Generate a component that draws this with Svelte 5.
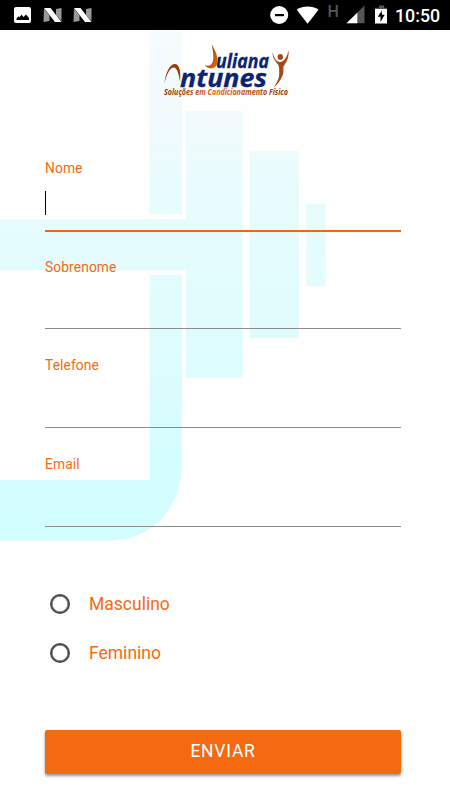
<script lang="ts">
    let values = $state({ nome: "", sobrenome: "", telefone: "", email: "" });
    let sexo = $state("");
    let active = $state("nome");

    const fields = [
        { id: "nome", label: "Nome" },
        { id: "sobrenome", label: "Sobrenome" },
        { id: "telefone", label: "Telefone" },
        { id: "email", label: "Email" },
    ] as const;

    const options = ["Masculino", "Feminino"];

    function handleSubmit(event: SubmitEvent) {
        event.preventDefault();
    }
</script>

<div class="screen">
    <svg class="backdrop" viewBox="0 0 450 800" aria-hidden="true">
        <defs>
            <linearGradient id="fade" gradientUnits="userSpaceOnUse" x1="0" y1="30" x2="0" y2="541">
                <stop offset="0" stop-color="#f7fbfc" />
                <stop offset="0.18" stop-color="#f1fafc" />
                <stop offset="0.3" stop-color="#e9fcfd" />
                <stop offset="0.6" stop-color="#dffcfd" />
                <stop offset="0.85" stop-color="#d4fdff" />
                <stop offset="1" stop-color="#d2fdff" />
            </linearGradient>
        </defs>
        <g fill="url(#fade)">
            <path d="M149.7 31h32.3v183.3h-32.3z" />
            <path d="M0 219.3h186V111h56.6v266.7H186V270.3H0z" />
            <path d="M249.4 151h49.6v187.3h-49.6z" />
            <path d="M306.2 203.7h19.6v82.2h-19.6z" />
            <path d="M149.7 274.8H182V462c0 48-31 78.6-74 78.6H0V480h149.7z" />
        </g>
    </svg>

    <div class="status">
        <svg width="110" height="30" viewBox="0 0 110 30">
            <path fill="#fff" fill-rule="evenodd" d="M16 7h13a2 2 0 0 1 2 2v12a2 2 0 0 1-2 2H16a2 2 0 0 1-2-2V9a2 2 0 0 1 2-2zm0.500 13h12.500v-2l-3-3.500-2.500 2.500-2-2.300-2 2.500-1-1-2 2.300z" />
            {#each [0, 30] as x}
                <g transform="translate({x} 0)">
                    <path fill="#999" d="M44 8.500l5.500 7V21l-6 1zM61.500 8v13l-5.500-6V9z" />
                    <path fill="#fff" d="M44 8h6.500l11 14H55z" />
                </g>
            {/each}
        </svg>
        <div class="right">
            <svg width="130" height="30" viewBox="265 0 130 30">
                <circle cx="279.200" cy="15" r="9" fill="#fff" />
                <path fill="#000" d="M275 14h9v2.200h-9z" />
                <path fill="#fff" d="M296.700 9.800c6-4.400 15.800-4.400 21.800 0L307.600 23.700z" />
                <text class="net" x="327.500" y="16.500">H</text>
                <path fill="#555" d="M364.500 5.500V23.300H346.500z" />
                <path fill="#fff" d="M357.300 12.700V23.300H346.500z" />
                <path fill="#555" d="M379 5.500h5v2.300h2.800V13H375V7.800h4z" />
                <path fill="#fff" fill-rule="evenodd" d="M375 9h12v14.500H375zM382 10l-4.200 6.800h2.700V22l4.200-7.200H382z" />
            </svg>
            <span>10:50</span>
        </div>
    </div>

    <header>
        <svg width="130" height="60" viewBox="162 42 130 60" role="img" aria-label="Juliana Antunes">
            <defs>
                <linearGradient id="flame" x1="0" y1="0" x2="1" y2="1">
                    <stop offset="0" stop-color="#8c3808" />
                    <stop offset="1" stop-color="#ed6a0c" />
                </linearGradient>
                <linearGradient id="tag" x1="0" y1="0" x2="1" y2="0">
                    <stop offset="0" stop-color="#8c3808" />
                    <stop offset="0.45" stop-color="#e06409" />
                    <stop offset="1" stop-color="#8c3808" />
                </linearGradient>
            </defs>
            <text class="name" x="216" y="67.500" font-size="19" textLength="53" lengthAdjust="spacingAndGlyphs">uliana</text>
            <text class="name" x="180" y="86.800" font-size="25.500" textLength="87" lengthAdjust="spacingAndGlyphs">ntunes</text>
            <text class="tagline" x="164" y="95" textLength="124" lengthAdjust="spacingAndGlyphs" fill="url(#tag)">Soluções em Condicionamento Físico</text>
            <path fill="#97400d" d="M164.300 83.500c1.500-12 6-20 11-19.500 4.500.7 5.600 8 4.800 17.500-1.700-9-3.500-14.500-6.800-14-4 .7-6.700 8-9 16z" />
            <path fill="url(#flame)" d="M211.800 44.500c4.500 8 8 16 4.300 21.500-2.300 3.300-7.800 3.300-11.300-.8 3.500 1 6.200.5 7.700-3 1.800-4.500.3-11-.7-17.700z" />
            <ellipse cx="280.300" cy="56.900" rx="2.700" ry="2.900" fill="#a34a14" />
            <path fill="#a34a14" d="M272.500 52c1.500 6 4 10 7.500 10 4-.3 7.500-5 8.500-12 .8 7.500-2 12-4.500 15.500-1.500 2.500.5 5.500-1.500 10-2 5-5.500 9.500-9 12 3.500-5 6-9.500 5.700-14.500-.2-3.500.5-6-1.200-8.500-2-3-5.500-5.500-5.500-12.500z" />
        </svg>
    </header>

    <form onsubmit={handleSubmit}>
        {#each fields as field}
            <div class="field" class:active={active === field.id}>
                <label for={field.id}>{field.label}</label>
                <div class="entry">
                    {#if active === field.id && !values[field.id]}
                        <i class="caret"></i>
                    {/if}
                    <input id={field.id} bind:value={values[field.id]} onfocus={() => (active = field.id)} />
                </div>
            </div>
        {/each}

        <div class="options">
            {#each options as option}
                <label class="option">
                    <input type="radio" name="sexo" value={option} bind:group={sexo} />
                    <span>{option}</span>
                </label>
            {/each}
        </div>

        <button type="submit">ENVIAR</button>
    </form>
</div>

<style>
    :global(body) {
        margin: 0;
        background: #fefefe;
    }
    .screen {
        position: relative;
        width: 450px;
        height: 800px;
        overflow: hidden;
        display: flex;
        flex-direction: column;
        font-family: Roboto, sans-serif;
        color: #f56a10;
    }
    .backdrop {
        position: absolute;
        inset: 0;
        z-index: -1;
    }
    .status {
        height: 30px;
        background: #000;
        color: #fff;
        display: flex;
        justify-content: space-between;
        flex: none;
    }
    .status svg {
        display: block;
    }
    .right {
        display: flex;
        width: 185px;
        font-size: 17.8px;
        font-weight: 500;
        line-height: 32px;
    }
    .net {
        font-size: 16px;
        font-weight: 500;
        fill: #555;
    }
    header {
        height: 72px;
        padding: 12px 0 0 162px;
        box-sizing: border-box;
        flex: none;
    }
    header svg {
        overflow: visible;
    }
    .name {
        font-family: "Open Sans", sans-serif;
        font-weight: 700;
        font-style: italic;
        fill: #0b2472;
        stroke: #0b2472;
        stroke-width: 0.3px;
    }
    .tagline {
        font-family: "Open Sans", sans-serif;
        font-size: 8px;
        font-weight: 700;
        font-style: italic;
    }
    form {
        display: flex;
        flex-direction: column;
        padding: 56px 49px 0 45px;
    }
    .field {
        height: 98.700px;
        display: flex;
        flex-direction: column;
    }
    .field label {
        height: 20.500px;
        font-size: 13.8px;
        line-height: 20px;
        letter-spacing: 0.1px;
    }
    .entry {
        height: 50px;
        display: flex;
        align-items: center;
        border-bottom: 1px solid #8c8c8c;
        padding-top: 1px;
    }
    .active .entry {
        border-bottom: 2px solid #f9630c;
        padding-bottom: 2px;
        padding-top: 0;
        height: 49px;
    }
    .entry input {
        flex: 1;
        min-width: 0;
        border: 0;
        padding: 0;
        outline: none;
        background: none;
        font: 18px Roboto, sans-serif;
        color: #222;
    }
    .caret {
        width: 1px;
        height: 24px;
        background: #000;
    }
    .options {
        display: flex;
        flex-direction: column;
        gap: 19px;
        padding: 36px 0 0 5px;
    }
    .option {
        display: flex;
        align-items: center;
        gap: 19px;
        height: 30px;
        font-size: 17.5px;
    }
    .option span {
        line-height: 30px;
    }
    .option input {
        appearance: none;
        width: 20px;
        height: 20px;
        margin: 0;
        box-sizing: border-box;
        border: 2px solid #4c4c4c;
        border-radius: 50%;
        box-shadow: inset 0 0 0 0.5px #4c4c4c;
    }
    .option input:checked {
        background: radial-gradient(#f56a10 45%, transparent 50%);
    }
    button {
        height: 44px;
        margin-top: 62px;
        padding-bottom: 3px;
        border: 0;
        border-radius: 2px;
        background: #f56a10;
        color: #fff;
        font: 17.5px Roboto, sans-serif;
        letter-spacing: 0.75px;
        box-shadow: 0 2px 3px rgba(0, 0, 0, 0.4);
    }
</style>
